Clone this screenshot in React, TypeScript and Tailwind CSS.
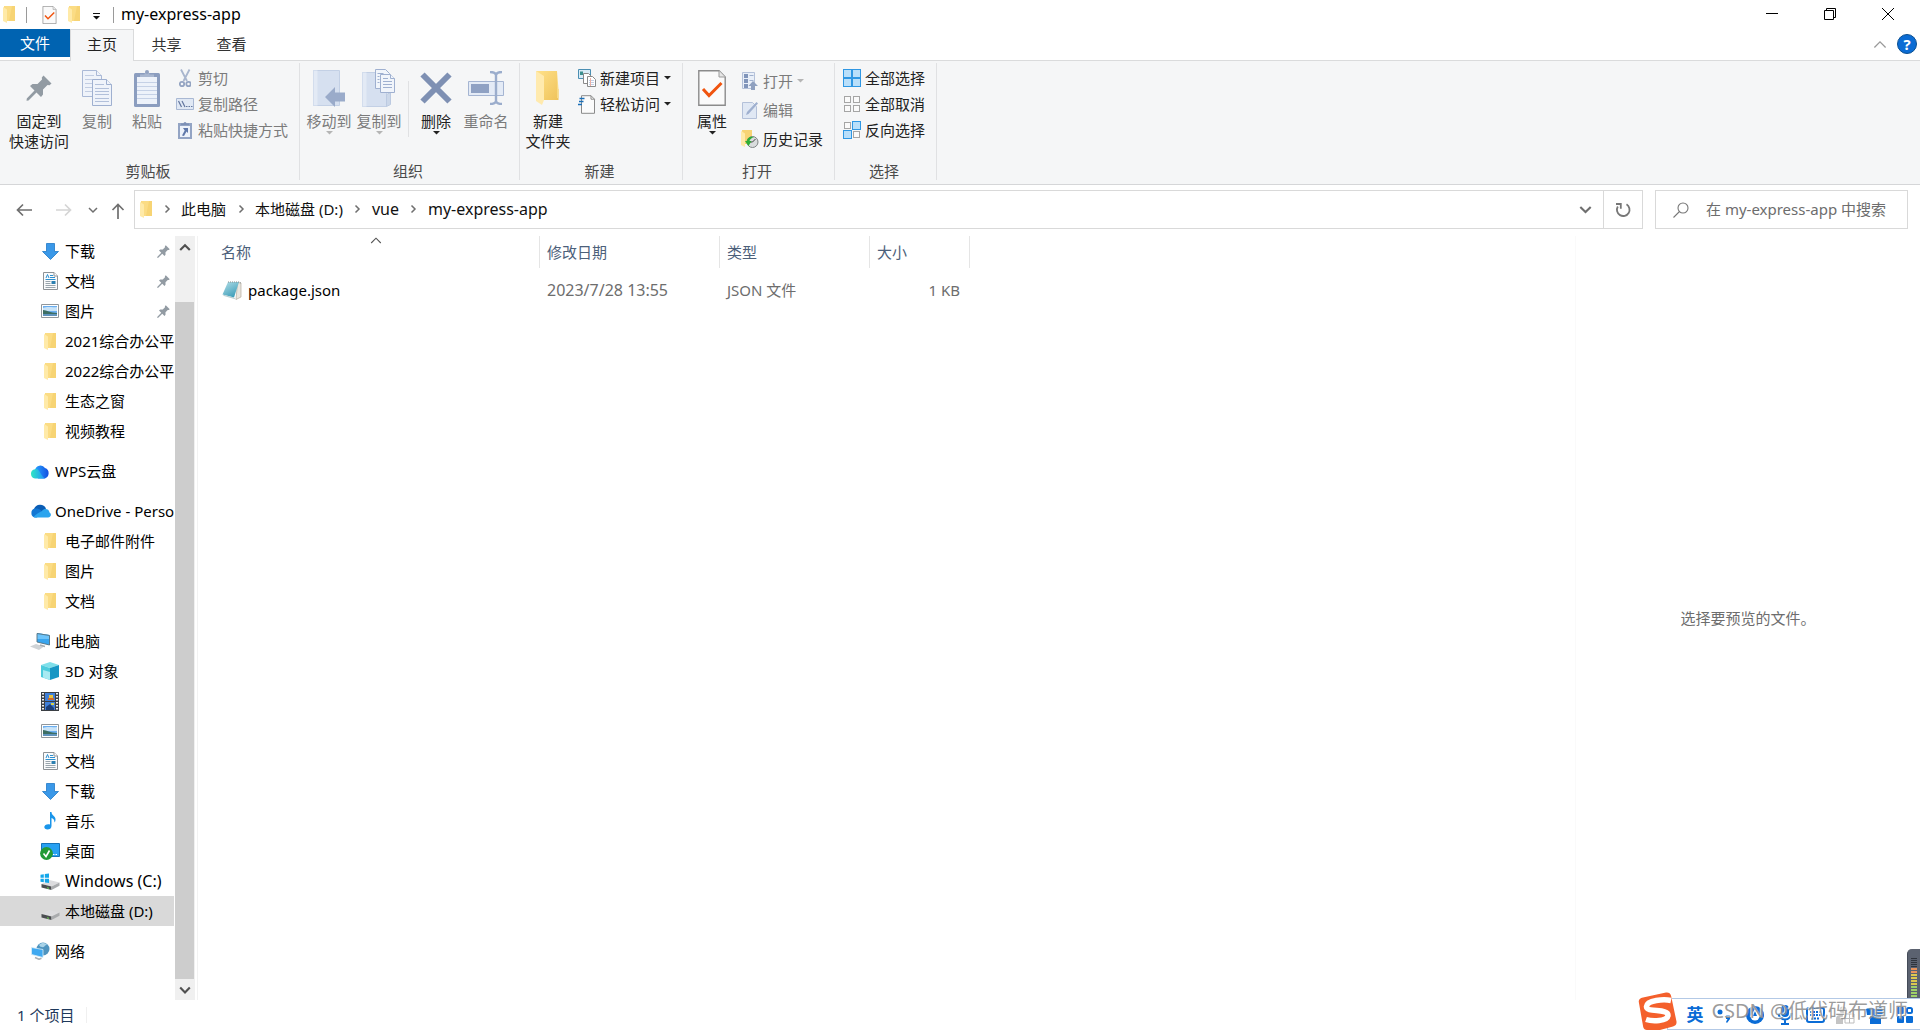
import type { ReactNode } from 'react';

/* ---------- small icons ---------- */

function Folder() {
  return (
    <svg width="12" height="17" viewBox="0 0 12 17">
      <path d="M1 0h11v15H2z" fill="#f7d474" />
      <path d="M1 0h8l-3 15H2z" fill="#fbdc84" />
      <path d="M0 1l4 2.500V17l-4-2z" fill="#ffeaa8" />
    </svg>
  );
}

function BigFolder() {
  return (
    <svg width="26" height="36" viewBox="0 0 26 36">
      <defs>
        <linearGradient id="bf" x1="0" x2="1" y1="0" y2="1">
          <stop offset="0" stopColor="#ffe18a" />
          <stop offset="1" stopColor="#efc35b" />
        </linearGradient>
      </defs>
      <path d="M1 1h21v18h1.500v11H6z" fill="url(#bf)" />
      <path d="M22 1v27h1.500V19z" fill="#f9db86" />
      <path d="M1 1l8 5v24l-2 5-6-4z" fill="#ffeaae" />
    </svg>
  );
}

function CheckPage({ w, h }: { w: number; h: number }) {
  return (
    <svg width={w} height={h} viewBox="0 0 28 36">
      <path d="M.8.8H21l6.200 6.200v28.200H.8z" fill="#fafafa" stroke="#8b8b8b" strokeWidth="1.400" />
      <path d="M21 .8V7h6.200" fill="#e6e6e6" stroke="#9b9b9b" />
      <path d="M5 19l6 6.500L23.500 13" fill="none" stroke="#f0540f" strokeWidth="3" />
    </svg>
  );
}

function Pin({ size }: { size: number }) {
  return (
    <svg width={size} height={size} viewBox="0 0 26 26" fill="#929ba3">
      <path d="M17.500 0.500L25.500 8.500 23.500 10.200 21.500 10 17 14.500 17 19.500 15 22 10.500 17.500 2.500 25.500 .5 25.800 .8 23.500 8.500 15.500 4 11 6.500 9 11.500 9 16 4.500 15.800 2.500z" />
    </svg>
  );
}

function CopyPages() {
  return (
    <svg width="30" height="36" viewBox="0 0 30 36" stroke="#aab9d6" fill="#eff3fa">
      <path d="M.5.500h14l5 5v21H.5z" />
      <path d="M14.500.500v5h5" />
      <path d="M3 5.500h9M3 9.500h13M3 13.500h13M3 17.500h13M3 21.500h13" stroke="#c2cde2" />
      <path d="M10.500 9.500h14l5 5v21h-19z" stroke="#9fb0d0" />
      <path d="M24.500 9.500v5h5" stroke="#9fb0d0" />
      <path d="M13 14.500h9M13 18.500h14M13 21.500h14M13 24.500h14M13 28.500h14M13 31.500h14" stroke="#b2c0da" />
    </svg>
  );
}

function Clipboard() {
  return (
    <svg width="26" height="37" viewBox="0 0 26 37">
      <rect x="0" y="3" width="26" height="34" rx="1.500" fill="#8b9dbf" />
      <rect x="3" y="7" width="20" height="27" fill="#edf2fa" />
      <path d="M3 12.500h20M3 16.500h20M3 20.500h20M3 24.500h20M3 28.500h20" stroke="#c5d1e6" />
      <path d="M6 7V4.500h4.500a2.500 2.500 0 015 0H20V7z" fill="#a9b7d0" />
      <circle cx="13" cy="2" r="2" fill="#93a3c2" />
    </svg>
  );
}

function Scissors() {
  return (
    <svg width="12" height="19" viewBox="0 0 12 19" fill="none" stroke="#94a4c2" strokeWidth="1.800">
      <path d="M2 0.500L8 12M10.500 0.500L4.500 12" stroke="#a9b6ce" />
      <circle cx="3" cy="15" r="2.200" />
      <circle cx="9.500" cy="15" r="2.200" />
    </svg>
  );
}

function PathIcon() {
  return (
    <svg width="18" height="12" viewBox="0 0 18 12">
      <path d="M.5.500h17v11H.5z" fill="#e0e8f4" stroke="#a9b8d3" />
      <path d="M2.500 3l3 6M6 3l3 6" stroke="#63779f" strokeWidth="1.200" />
      <path d="M10 8.500h1.500M12.500 8.500H14M15 8.500h1.500" stroke="#63779f" strokeWidth="1.200" />
    </svg>
  );
}

function ShortcutClip() {
  return (
    <svg width="14" height="18" viewBox="0 0 14 18">
      <rect width="14" height="16" y="2" fill="#93a4c4" />
      <rect x="2" y="5" width="10" height="11" fill="#edf2fa" />
      <path d="M3 4V2.500h2.500a1.500 1.500 0 013 0H11V4z" fill="#7d90b5" />
      <path d="M5 7h5v5l-1.500-1.500L6 15l-2-.5 2.700-5z" fill="#5f78aa" />
    </svg>
  );
}

function MoveTo() {
  return (
    <svg width="32" height="37" viewBox="0 0 32 37">
      <path d="M.5.500h26v35H.5z" fill="#d6e0f0" stroke="#c3d0e5" />
      <path d="M.5.500h4v35h-4z" fill="#e3eaf5" />
      <path d="M12 27l10-10v5.500h10v9H22V37z" fill="#9aabca" />
    </svg>
  );
}

function CopyTo() {
  return (
    <svg width="34" height="38" viewBox="0 0 34 38">
      <path d="M.5 3.500h24v34H.5z" fill="#d6e0f0" stroke="#c3d0e5" />
      <path d="M.5 3.500h4v34h-4z" fill="#e3eaf5" />
      <path d="M24.500 37.500v-12l4-2v12z" fill="#cbd7e9" stroke="#bccae1" />
      <g fill="#f1f5fb" stroke="#9fb0d0">
        <path d="M13.500.500h10l4 4v15h-14z" />
        <path d="M18.500 5.500h10l4 4v14h-14z" />
        <path d="M28.500 5.500v4h4M21 9.500h5M21 12.500h9M21 15.500h9M21 18.500h9M15.500 4.500h6M15.500 7.500h2M15.500 10.500h2M15.500 13.500h2" />
      </g>
    </svg>
  );
}

function DeleteX() {
  return (
    <svg width="32" height="32" viewBox="0 0 32 32">
      <path d="M2.500 2.500l27 27M29.500 2.500l-27 27" stroke="#7e90b3" strokeWidth="6" />
    </svg>
  );
}

function Rename() {
  return (
    <svg width="36" height="34" viewBox="0 0 36 34">
      <path d="M.5 10.500h35v14H.5z" fill="#e4ebf6" stroke="#a5b5d2" />
      <path d="M3 13h18v9H3z" fill="#8fa1c3" />
      <path d="M22 1c4 0 5.500 1 6 3 .5-2 2-3 6-3M28 3v28M22 33c4 0 5.500-1 6-3 .5 2 2 3 6 3" fill="none" stroke="#9badcc" strokeWidth="2.400" />
    </svg>
  );
}

function NewItem() {
  return (
    <svg width="18" height="18" viewBox="0 0 18 18">
      <path d="M.5.500h12v9H.5z" fill="#d9ecf7" stroke="#4b8fb3" />
      <path d="M2 6V2.500h3V6z" fill="#3a8f8f" />
      <path d="M5.500 4.500h5l3 3v7h-8z" fill="#fff" stroke="#8a8a8a" />
      <path d="M9.500 7.500h5l3 3v7h-8z" fill="#fff" stroke="#8a8a8a" />
      <path d="M11 11.500h5M11 13.500h5M11 15.500h5" stroke="#c3cfe6" />
      <path d="M12.500 9v8" stroke="#eab0a6" />
    </svg>
  );
}

function EasyAccess() {
  return (
    <svg width="18" height="19" viewBox="0 0 18 19">
      <path d="M3.500.700h9.500l3.500 3.500v14.100h-13z" fill="#fbfbfb" stroke="#8a8a8a" />
      <path d="M13 .7v3.500h3.500" fill="none" stroke="#8a8a8a" />
      <path d="M1.500 3.500h5M1 6.500h4.500M0 9.500h4" stroke="#1b6fb8" strokeWidth="1.400" />
    </svg>
  );
}

function OpenIcon() {
  return (
    <svg width="16" height="18" viewBox="0 0 16 18">
      <path d="M.5.500h12v16H.5z" fill="#e9eff8" stroke="#b4c1d9" />
      <path d="M2 2h4v4H2zM2 7h4v4H2zM2 12h4v4H2z" fill="#8195ba" />
      <path d="M7.500 3.500h4M7.500 8.500h4" stroke="#9fb0ce" />
      <path d="M11 9l5 5h-3v4H9v-4H6.500z" fill="#8fa0bf" />
    </svg>
  );
}

function EditIcon() {
  return (
    <svg width="16" height="18" viewBox="0 0 16 18">
      <path d="M.5 1.500h10l4 4v12H.5z" fill="#e0e8f4" stroke="#b4c1d9" />
      <path d="M4 14l1-3L14.500 1 16 2.500 6.500 13z" fill="#9fb0cf" />
    </svg>
  );
}

function HistoryIcon() {
  return (
    <svg width="18" height="18" viewBox="0 0 18 18">
      <path d="M1 0h10v14H2z" fill="#f7d474" />
      <path d="M0 1l4 2.500V17l-4-2z" fill="#ffeaa8" />
      <circle cx="11.500" cy="12" r="5.500" fill="#d9dcdd" stroke="#7f8484" />
      <path d="M11.500 12l3-3M8.500 12h3" stroke="#444" />
      <path d="M13 7c-4-1-7 1-7 4H4l3.500 5 3-5H8.500c.5-2 2-3 4.500-4z" fill="#2fae35" />
    </svg>
  );
}

function Tiles({ on }: { on: boolean[] }) {
  const at = [[1, 1], [10, 1], [1, 10], [10, 10]];
  return (
    <svg width="18" height="18" viewBox="0 0 18 18">
      {at.map(([x, y], i) => (
        <rect
          key={i}
          x={on[i] ? x - 0.5 : x + 0.5}
          y={on[i] ? y - 0.5 : y + 0.5}
          width={on[i] ? 8 : 6}
          height={on[i] ? 8 : 6}
          fill={on[i] ? '#b9dffa' : '#fafafa'}
          stroke={on[i] ? '#2f97e3' : '#a5a5a5'}
        />
      ))}
    </svg>
  );
}

function Caret({ color = '#222' }: { color?: string }) {
  return (
    <svg width="7" height="4" viewBox="0 0 7 4">
      <path d="M0 0h7L3.500 3.500z" fill={color} />
    </svg>
  );
}

function Chevron({ d, color = '#6f6f6f', w = 10, sw = 1.5 }: { d: 'up' | 'down' | 'right'; color?: string; w?: number; sw?: number }) {
  const p = { up: 'M1 7.500L5 3.500 9 7.500', down: 'M1 3L5 7 9 3', right: 'M3.500 1.500L7 5 3.500 8.500' }[d];
  return (
    <svg width={w} height={w} viewBox="0 0 10 10" fill="none" stroke={color} strokeWidth={sw}>
      <path d={p} />
    </svg>
  );
}

function Arrow({ d, color }: { d: 'left' | 'right' | 'up'; color: string }) {
  const p = {
    left: 'M16 8H1.500M7 2.500L1.500 8 7 13.500',
    right: 'M0 8h14.500M9 2.500L14.500 8 9 13.500',
    up: 'M8 16V1.500M2.500 7L8 1.500 13.500 7',
  }[d];
  return (
    <svg width="16" height="16" viewBox="0 0 16 16" fill="none" stroke={color} strokeWidth="1.700">
      <path d={p} />
    </svg>
  );
}

/* ---------- navigation icons ---------- */

function DownArrow() {
  return (
    <svg width="17" height="17" viewBox="0 0 17 17">
      <path d="M4.500.5h8v8h4L8.500 16.500.5 8.500h4z" fill="#3a98e8" stroke="#2079c7" strokeWidth=".8" />
    </svg>
  );
}

function DocIcon() {
  return (
    <svg width="15" height="18" viewBox="0 0 15 18">
      <path d="M.5.500h10.500l3.500 3.500v13.500H.5z" fill="#fafbfc" stroke="#8d9296" />
      <path d="M11 .5v3.500h3.500" fill="#fff" stroke="#8d9296" />
      <path d="M3 6l1.500-3.500L6 6M7 3.500h3M7 5.500h5M2.500 7.500h10" fill="none" stroke="#2c8fd0" />
      <path d="M2.500 9.500h5M2.500 11.500h5M2.500 13.500h10M2.500 15.500h10" stroke="#9aa5ad" />
      <path d="M8.500 9h4v3h-4z" fill="#2c7fb0" />
    </svg>
  );
}

function PictureIcon() {
  return (
    <svg width="18" height="14" viewBox="0 0 18 14">
      <path d="M.5.500h17v13H.5z" fill="#fff" stroke="#90979c" />
      <path d="M2 2h14v10H2z" fill="#6aaef0" />
      <path d="M2 4c5-2 9 0 14-1v4H2z" fill="#c8e3f8" />
      <path d="M2 6c4 0 7 3 14 3v2H2z" fill="#3d6f64" />
      <path d="M2 10h14v2H2z" fill="#5f93bd" />
    </svg>
  );
}

function WpsCloud() {
  return (
    <svg width="20" height="15" viewBox="0 0 20 15">
      <defs>
        <linearGradient id="wc" x1="0" x2="1">
          <stop offset="0" stopColor="#2fe6c4" />
          <stop offset="1" stopColor="#1f8dff" />
        </linearGradient>
        <linearGradient id="wr" x1="0" x2="1">
          <stop offset="0" stopColor="#27a2ff" />
          <stop offset="1" stopColor="#124fe0" />
        </linearGradient>
      </defs>
      <path d="M5 6a5.500 5.500 0 0110-2 5.500 5.500 0 01-.5 10.500H8z" fill="url(#wr)" />
      <path d="M5 14.500a4.700 4.700 0 010-9.300c3-.5 4 1.500 5.500 4s3 5 5.500 5.300z" fill="url(#wc)" />
    </svg>
  );
}

function OneDrive() {
  return (
    <svg width="21" height="14" viewBox="0 0 21 14">
      <path d="M4 5a6.500 6.500 0 0112-.5l-4 4z" fill="#0a5db5" />
      <path d="M5 13.500A4.600 4.600 0 015 4.500c3-.5 5 1 7 2.500l-5 6.500z" fill="#1377d3" />
      <path d="M12 7c2-3 7-2.500 7.500 1.500C22 10 21 13.500 18 13.500H4.500C1.500 13.500 8 9 12 7z" fill="#2ba4ee" />
    </svg>
  );
}

function Computer() {
  return (
    <svg width="20" height="17" viewBox="0 0 20 17">
      <path d="M7 0l12.500 2v10L7 9z" fill="#39a5ee" />
      <path d="M7 0l12.500 2v4L7 6z" fill="#6cc4fb" />
      <path d="M7 .5l12.500 2v9.500L7 9z" fill="none" stroke="#53707f" strokeWidth=".9" />
      <path d="M0 13.500l6-2.500 8 2.500-5 3.500z" fill="#cfd3d6" />
      <path d="M10 12l5 1.500" stroke="#a7acb0" strokeWidth="1.500" />
    </svg>
  );
}

function Cube() {
  return (
    <svg width="18" height="18" viewBox="0 0 18 18">
      <path d="M9 0l9 3-9 3-9-3z" fill="#7fdfea" />
      <path d="M0 3l9 3v12l-9-3z" fill="#4ccbdc" />
      <path d="M18 3L9 6v12l9-3z" fill="#1796c4" />
      <path d="M2 8l7 2v8l-7-2.500z" fill="#a8eaf2" />
    </svg>
  );
}

function Film() {
  return (
    <svg width="18" height="19" viewBox="0 0 18 19">
      <path d="M0 0h18v19H0z" fill="#3a3f44" />
      <path d="M4 1h10v8H4zM4 10h10v8H4z" fill="#3f7fd8" />
      <path d="M8 3h4v3H8z" fill="#e8c23a" />
      <path d="M7 6h6v2H7z" fill="#c9682f" />
      <path d="M5 15l4-3 4 4v2H5z" fill="#1d3f77" />
      <path d="M10 11h3v2h-3z" fill="#d5d04c" />
      <path d="M2 1v17M16 1v17" stroke="#f1f1f1" strokeWidth="2" strokeDasharray="1.500 1.500" />
    </svg>
  );
}

function Music() {
  return (
    <svg width="12" height="18" viewBox="0 0 12 18">
      <path d="M6 0h1.500c0 3.500 4 4 4 7.500 0 1.500-.5 2.500-1 3 0-3-1.500-4-3-4.500V14c0 2.500-2 3.500-4 3.500S.3 16.300.3 15c0-2 3-3.500 5.700-2.500z" fill="#1a95ea" />
    </svg>
  );
}

function Desktop() {
  return (
    <svg width="20" height="17" viewBox="0 0 20 17">
      <path d="M1.500.500h18v13h-18z" fill="#27a0f2" stroke="#1572b8" />
      <path d="M13 11.500h1.500M15.500 11.500H17" stroke="#fff" />
      <circle cx="6.500" cy="10.500" r="6.400" fill="#239a36" />
      <path d="M3.500 10.500l2.500 3 3.500-6" fill="none" stroke="#fff" strokeWidth="1.600" />
    </svg>
  );
}

function Drive({ win = false }: { win?: boolean }) {
  return (
    <svg width="20" height="17" viewBox="0 0 20 17">
      <path d="M1.500 11l8-4 10 2.500-8 4z" fill="#dcdcde" />
      <path d="M1.500 11l10 2.500V17l-10-2.500z" fill="#4a4d50" />
      <path d="M11.500 13.500l8-4v3.200L11.500 17z" fill="#a9abad" />
      <path d="M7 14.800l2 .5" stroke="#6bd64b" />
      {win && (
        <g>
          <path d="M0 0h9v10H0z" fill="#fff" />
          <path d="M.5 1.800l3.300-.5v3.500H.5zM4.800 1L9 .4v4.400H4.800zM.5 5.800h3.300v3.400l-3.300-.5zM4.800 5.800H9V10l-4.200-.6z" fill="#14a7ea" />
        </g>
      )}
    </svg>
  );
}

function Network() {
  return (
    <svg width="19" height="18" viewBox="0 0 19 18">
      <circle cx="12" cy="7" r="6.500" fill="#4f94bf" />
      <path d="M8 3c3-3 7-2 8 0-3 0-2 3-5 2-2 0-2-1-3-2z" fill="#a9d3e8" />
      <path d="M.5 5.500L12 7.500v8L.5 12.500z" fill="#3fa9f1" stroke="#dbeef8" strokeWidth=".8" />
      <path d="M4 15.500l4 1.800 2.500-1" fill="none" stroke="#a9b0b5" strokeWidth="1.500" />
    </svg>
  );
}

function Notepad() {
  return (
    <svg width="20" height="19" viewBox="0 0 20 19" className="shrink-0">
      <defs>
        <linearGradient id="np" x1="0" y1="0" x2=".6" y2="1">
          <stop offset="0" stopColor="#b5dfe8" />
          <stop offset="1" stopColor="#3f9fba" />
        </linearGradient>
      </defs>
      <path d="M15.500 1.500l3.500.5v14l-5 2.500z" fill="#e9e6df" stroke="#a89f90" strokeWidth=".6" />
      <path d="M6 1h11l-5 15.500L.5 13.500z" fill="url(#np)" />
      <path d="M6 1h11l2 1" fill="none" stroke="#8a8f8f" strokeDasharray="1 1" />
      <path d="M.5 13.500L12 16.500l2 2L2 15z" fill="#b9cfd3" />
    </svg>
  );
}

/* ---------- ribbon parts ---------- */

function Group({ label, width, children }: { label: string; width: string; children: ReactNode }) {
  return (
    <section className={`${width} relative flex h-full shrink-0 flex-col`}>
      <div className="flex h-[100px] items-start">{children}</div>
      <h2 className="pr-1 text-center leading-5 text-[#4a4a4a]">{label}</h2>
      <span className="absolute top-0.5 right-0 bottom-1 w-px bg-[#e0e1e3]" />
    </section>
  );
}

function Big({ icon, lines, width = 'w-[50px]', off, caret }: { icon: ReactNode; lines: string[]; width?: string; off?: boolean; caret?: boolean }) {
  return (
    <button disabled={off} className={`${width} flex shrink-0 flex-col items-center pt-1.5 whitespace-nowrap ${off ? 'text-[#7b7b7b]' : 'text-[#222]'}`}>
      <span className="flex h-[42px] items-center justify-center">{icon}</span>
      <span className="mt-0.5 leading-5">
        {lines.map((l) => (
          <span key={l} className="block">{l}</span>
        ))}
      </span>
      {caret && <Caret color={off ? '#b5b5b5' : '#222'} />}
    </button>
  );
}

function Small({ icon, text, off, caret, tall }: { icon: ReactNode; text: string; off?: boolean; caret?: boolean; tall?: boolean }) {
  return (
    <button disabled={off} className={`flex items-center gap-1 whitespace-nowrap ${tall ? 'h-[29px]' : 'h-[26px]'} ${off ? 'text-[#7b7b7b]' : 'text-[#222]'}`}>
      <span className="flex w-[18px] justify-center">{icon}</span>
      {text}
      {caret && <Caret color={off ? '#b5b5b5' : '#222'} />}
    </button>
  );
}

type Item = { icon: ReactNode; text: string; top?: boolean; pin?: boolean; sel?: boolean; latin?: boolean };

const tree: Item[][] = [
  [
    { icon: <DownArrow />, text: '下载', pin: true },
    { icon: <DocIcon />, text: '文档', pin: true },
    { icon: <PictureIcon />, text: '图片', pin: true },
    { icon: <Folder />, text: '2021综合办公平' },
    { icon: <Folder />, text: '2022综合办公平' },
    { icon: <Folder />, text: '生态之窗' },
    { icon: <Folder />, text: '视频教程' },
  ],
  [{ icon: <WpsCloud />, text: 'WPS云盘', top: true }],
  [
    { icon: <OneDrive />, text: 'OneDrive - Perso', top: true },
    { icon: <Folder />, text: '电子邮件附件' },
    { icon: <Folder />, text: '图片' },
    { icon: <Folder />, text: '文档' },
  ],
  [
    { icon: <Computer />, text: '此电脑', top: true },
    { icon: <Cube />, text: '3D 对象' },
    { icon: <Film />, text: '视频' },
    { icon: <PictureIcon />, text: '图片' },
    { icon: <DocIcon />, text: '文档' },
    { icon: <DownArrow />, text: '下载' },
    { icon: <Music />, text: '音乐' },
    { icon: <Desktop />, text: '桌面' },
    { icon: <Drive win />, text: 'Windows (C:)', latin: true },
    { icon: <Drive />, text: '本地磁盘 (D:)', sel: true },
  ],
  [{ icon: <Network />, text: '网络', top: true }],
];

function TreeItem({ icon, text, top, pin, sel, latin }: Item) {
  return (
    <li>
      <a href="#" className={`flex h-[30px] items-center whitespace-nowrap ${top ? 'pl-[29px]' : 'pl-[39px]'} ${sel ? 'bg-[#d9d9d9]' : ''}`}>
        <span className="flex w-[22px] shrink-0 justify-center">{icon}</span>
        <span className={latin ? 'ml-1 text-base leading-5' : 'ml-1'}>{text}</span>
        {pin && (
          <span className="mr-1 ml-auto">
            <Pin size={13} />
          </span>
        )}
      </a>
    </li>
  );
}

function Titlebar() {
  return (
    <header className="flex h-[29px] items-center">
      <div className="flex h-full flex-1 items-center">
        <span className="ml-[3px]"><Folder /></span>
        <span className="ml-[11px] h-4 w-px bg-[#9a9a9a]" />
        <button aria-label="属性" className="ml-[15px]"><CheckPage w={15} h={18} /></button>
        <button aria-label="新建文件夹" className="ml-[11px]"><Folder /></button>
        <button aria-label="自定义快速访问工具栏" className="ml-[13px] pt-1">
          <svg width="7" height="7" viewBox="0 0 7 7"><path d="M0 0h7v1H0zM0 3h7L3.500 6.500z" fill="#111" /></svg>
        </button>
        <span className="ml-[13px] h-4 w-px bg-[#9a9a9a]" />
        <h1 className="ml-[7px] pb-0.5 text-base leading-5">my-express-app</h1>
      </div>
      <button aria-label="最小化" className="flex h-7 w-[58px] items-center justify-center self-start">
        <svg width="12" height="12"><path d="M0 5.500h12" stroke="#000" /></svg>
      </button>
      <button aria-label="还原" className="flex h-7 w-[58px] items-center justify-center self-start">
        <svg width="12" height="12" fill="none" stroke="#000"><path d="M.5 2.500h9v9h-9zM2.500 2.500v-2h9v9h-2" /></svg>
      </button>
      <button aria-label="关闭" className="mr-[3px] flex h-7 w-[58px] items-center justify-center self-start">
        <svg width="12" height="12" stroke="#000"><path d="M0 0l12 12M12 0L0 12" /></svg>
      </button>
    </header>
  );
}

function Tabs() {
  return (
    <nav className="flex h-8 items-start border-b border-[#dadbdc]">
      <button className="h-7 w-[70px] bg-[#0063b1] text-white">文件</button>
      <button className="h-8 w-16 border border-b-0 border-[#dadbdc] bg-[#f5f6f7] pb-1 text-[#222]">主页</button>
      <button className="h-[31px] w-[65px] pb-0.5 text-[#333]">共享</button>
      <button className="h-[31px] w-[65px] pb-0.5 text-[#333]">查看</button>
      <div className="mr-[3px] ml-auto flex h-[30px] items-center gap-2.5">
        <button aria-label="最小化功能区"><Chevron d="up" w={14} sw={0.9} color="#999" /></button>
        <button aria-label="帮助" className="h-5 w-5 rounded-full border border-[#0a4f91] bg-[#0b6cd4] text-[15px] leading-[18px] font-bold text-white">?</button>
      </div>
    </nav>
  );
}

function Ribbon() {
  return (
    <div className="flex h-[124px] border-b border-[#d5d6d8] bg-[#f5f6f7]">
      <Group label="剪贴板" width="w-[300px]">
        <div className="flex pl-[9px]">
          <Big icon={<Pin size={26} />} lines={['固定到', '快速访问']} width="w-[60px]" />
          <span className="w-[3px]" />
          <Big icon={<CopyPages />} lines={['复制']} off />
          <Big icon={<Clipboard />} lines={['粘贴']} off />
        </div>
        <div className="ml-1 flex flex-col pt-1">
          <Small icon={<Scissors />} text="剪切" off />
          <Small icon={<PathIcon />} text="复制路径" off />
          <Small icon={<ShortcutClip />} text="粘贴快捷方式" off />
        </div>
      </Group>
      <Group label="组织" width="w-[220px]">
        <div className="flex pl-1">
          <Big icon={<MoveTo />} lines={['移动到']} off caret />
          <Big icon={<CopyTo />} lines={['复制到']} off caret />
          <span className="mt-5 mr-0.5 ml-1 h-[56px] w-px bg-[#e0e1e3]" />
          <Big icon={<DeleteX />} lines={['删除']} caret />
          <Big icon={<Rename />} lines={['重命名']} off />
        </div>
      </Group>
      <Group label="新建" width="w-[163px]">
        <Big icon={<BigFolder />} lines={['新建', '文件夹']} width="w-[56px]" />
        <div className="ml-0.5 flex flex-col pt-1">
          <Small icon={<NewItem />} text="新建项目" caret />
          <Small icon={<EasyAccess />} text="轻松访问" caret />
        </div>
      </Group>
      <Group label="打开" width="w-[152px]">
        <Big icon={<CheckPage w={28} h={36} />} lines={['属性']} width="w-[58px]" caret />
        <div className="flex flex-col pt-[5px]">
          <Small icon={<OpenIcon />} text="打开" off caret tall />
          <Small icon={<EditIcon />} text="编辑" off tall />
          <Small icon={<HistoryIcon />} text="历史记录" tall />
        </div>
      </Group>
      <Group label="选择" width="w-[102px]">
        <div className="ml-2 flex flex-col pt-1">
          <Small icon={<Tiles on={[true, true, true, true]} />} text="全部选择" />
          <Small icon={<Tiles on={[false, false, false, false]} />} text="全部取消" />
          <Small icon={<Tiles on={[false, true, true, false]} />} text="反向选择" />
        </div>
      </Group>
    </div>
  );
}

function AddressRow() {
  const crumbs = ['此电脑', '本地磁盘 (D:)', 'vue', 'my-express-app'];
  return (
    <div className="flex items-center pt-[5px] pr-3 pb-[7px]">
      <button aria-label="后退" className="ml-4"><Arrow d="left" color="#6f6f6f" /></button>
      <button aria-label="前进" className="ml-6" disabled><Arrow d="right" color="#d5d5d5" /></button>
      <button aria-label="最近位置" className="ml-4"><Chevron d="down" /></button>
      <button aria-label="上移" className="mt-0.5 ml-3"><Arrow d="up" color="#6f6f6f" /></button>
      <div className="ml-2 flex h-[39px] flex-1 items-center border border-[#d9d9d9] pl-[5px]">
        <Folder />
        <ol className="flex flex-1 items-center pb-0.5">
          {crumbs.map((c, i) => (
            <li key={c} className="flex items-center">
              <span className="flex w-[29px] justify-center"><Chevron d="right" /></span>
              <button className={i > 1 ? 'text-base leading-5 text-[#111]' : 'text-[#111]'}>{c}</button>
            </li>
          ))}
        </ol>
        <button aria-label="以前的位置" className="flex w-9 justify-center"><Chevron d="down" w={13} sw={1.6} /></button>
        <button aria-label="刷新" className="flex h-full w-[39px] items-center justify-center border-l border-[#d9d9d9]">
          <svg width="16" height="16" viewBox="0 0 16 16" fill="none" stroke="#777" strokeWidth="1.800">
            <path d="M11.500 2.300A6.300 6.300 0 112.800 4.500M1 2h4.800v4.800" />
          </svg>
        </button>
      </div>
      <label className="ml-3 flex h-[39px] w-[253px] items-center border border-[#d9d9d9] pl-[17px]">
        <svg width="16" height="16" viewBox="0 0 16 16" fill="none" stroke="#777" strokeWidth="1.100">
          <circle cx="10" cy="6" r="5" />
          <path d="M6.500 9.500L.5 15.500" />
        </svg>
        <input type="search" aria-label="搜索" placeholder="在 my-express-app 中搜索" className="ml-[17px] w-0 flex-1 pb-0.5 outline-none placeholder:text-[#6d6d6d]" />
      </label>
    </div>
  );
}

function FileTable() {
  const th = 'border-r border-[#e5e5e5] pl-[7px] text-left font-normal text-[#4c607a]';
  return (
    <table className="w-[772px] table-fixed border-separate border-spacing-0">
      <thead>
        <tr className="h-8">
          <th className="relative w-[342px] border-r border-[#e5e5e5] pl-[23px] text-left font-normal text-[#4c607a]">
            名称
            <span className="absolute inset-x-0 -top-0.5 flex justify-center pl-3.5"><Chevron d="up" w={12} sw={0.9} color="#555" /></span>
          </th>
          <th className={`${th} w-[180px]`}>修改日期</th>
          <th className={`${th} w-[150px]`}>类型</th>
          <th className={`${th} w-[100px]`}>大小</th>
        </tr>
      </thead>
      <tbody>
        <tr className="h-11 text-[#6d6d6d]">
          <td className="pl-6">
            <a href="#" className="flex items-center gap-1.5 text-black"><Notepad />package.json</a>
          </td>
          <td className="pl-[7px] text-base leading-5">2023/7/28 13:55</td>
          <td className="pl-[7px]">JSON 文件</td>
          <td className="pr-2.5 text-right">1 KB</td>
        </tr>
      </tbody>
    </table>
  );
}

function ImeBar() {
  const cell = 'flex h-full w-[30px] items-center justify-center pt-0.5';
  return (
    <div className="absolute right-0 bottom-0 flex h-8 items-center border border-r-0 border-[#b3c9e6] bg-white pl-3 text-[#0a6cd6]">
      <svg width="40" height="38" viewBox="0 0 40 38" className="absolute right-[242px] -bottom-px">
        <path d="M5 5.500L28 .5q4-.5 5 3l5.500 26q.5 4-3.500 5L22 38H9q-3 0-3.800-3L.8 10q-.5-3.500 4.200-4.500z" fill="#f4602c" />
        <path d="M33 8.500c-7-1.500-24-.5-24.500 6C8 21 30.500 16 30 23.500c-.5 6-16 6-22 4" fill="none" stroke="#fff" strokeWidth="5.500" />
      </svg>
      <button className={`${cell} text-[17px] font-bold`}>英</button>
      <button aria-label="标点" className={cell}>
        <svg width="18" height="18" viewBox="0 0 18 18" fill="currentColor"><circle cx="4" cy="6" r="2.500" /><path d="M10 9h4v4l-3 4-1-1 1.500-3H10z" /></svg>
      </button>
      <button aria-label="智能助手" className={cell}>
        <svg width="18" height="18" viewBox="0 0 18 18"><circle cx="9" cy="9" r="9" fill="currentColor" /><path d="M9 3l4.500 7a4.500 4.500 0 01-9 0z" fill="#fff" /><path d="M9 5l2 5H7z" fill="currentColor" /></svg>
      </button>
      <button aria-label="语音" className={cell}>
        <svg width="16" height="20" viewBox="0 0 16 20" fill="none" stroke="currentColor" strokeWidth="2"><rect x="5" y="1" width="6" height="10" rx="3" fill="currentColor" /><path d="M1.500 8a6.500 6.500 0 0013 0M8 14v5M4 19h8" /></svg>
      </button>
      <button aria-label="软键盘" className={cell}>
        <svg width="19" height="16" viewBox="0 0 19 16" fill="none" stroke="currentColor" strokeWidth="2"><rect x="1" y="1" width="17" height="14" rx="2" /><path d="M4 5h11M4 8h11M5 11.500h9" strokeDasharray="2 1" /></svg>
      </button>
      <button aria-label="登录" className={cell}>
        <svg width="19" height="18" viewBox="0 0 19 18" fill="#c4c4c4"><circle cx="7" cy="4" r="3.500" /><path d="M0 18v-5q0-4 4-4h3v9z" /><path d="M9 8h9v9H9zM9 12.500h9M13.500 8v9" fill="#fff" stroke="#bdbdbd" /></svg>
      </button>
      <button aria-label="皮肤" className={cell}>
        <svg width="19" height="17" viewBox="0 0 19 17" fill="currentColor"><path d="M0 2l5-2q4.500 4 9 0l5 2-1 6h-3v9H4V8H1z" /></svg>
      </button>
      <button aria-label="工具箱" className={cell}>
        <svg width="16" height="16" viewBox="0 0 16 16" fill="currentColor"><rect width="7" height="7" rx="1" /><rect x="10" y="1" width="5" height="5" rx="1.500" fill="none" stroke="currentColor" strokeWidth="2" /><rect y="9" width="7" height="7" rx="1" /><rect x="9" y="9" width="7" height="7" rx="1" /></svg>
      </button>
      <span className="pointer-events-none absolute right-3 bottom-1 text-[20px] leading-7 whitespace-nowrap text-[#8a8a8a]/85 [text-shadow:-1px_-1px_1px_#fff]">
        CSDN @低代码布道师
      </span>
    </div>
  );
}

function Meter() {
  return (
    <div className="absolute right-0 bottom-8 flex h-[49px] w-[13px] flex-col items-center rounded-tl-[5px] border-l border-[#444b58] bg-[#5b6270] pt-2">
      <svg width="6" height="40" viewBox="0 0 6 40">
        <path d="M3 1v9" stroke="#2f343d" strokeWidth="6" strokeDasharray="1 1" />
        <path d="M3 11v6" stroke="#e8935c" strokeWidth="6" strokeDasharray="2 1" />
        <path d="M3 17v12" stroke="#dcc84e" strokeWidth="6" strokeDasharray="2 1" />
        <path d="M3 29v11" stroke="#9fd068" strokeWidth="6" strokeDasharray="2 1" />
      </svg>
    </div>
  );
}

export default function App() {
  return (
    <div className="relative flex min-h-screen flex-col overflow-hidden bg-white font-['Noto_Sans','Noto_Sans_CJK_SC',sans-serif] text-[15px] leading-5 text-black">
      <Titlebar />
      <Tabs />
      <Ribbon />
      <AddressRow />
      <main className="flex flex-1">
        <nav aria-label="导航窗格" className="w-[174px] shrink-0">
          {tree.map((g, i) => (
            <ul key={i} className="mb-2.5">
              {g.map((it) => (
                <TreeItem key={it.text} {...it} />
              ))}
            </ul>
          ))}
        </nav>
        <div className="ml-px flex w-5 shrink-0 flex-col bg-[#f0f0f0]">
          <button aria-label="向上滚动" className="flex h-[21px] items-center justify-center"><Chevron d="up" w={12} sw={1.8} color="#505050" /></button>
          <span className="mt-[45px] w-[19px] flex-1 bg-[#cdcdcd]" />
          <button aria-label="向下滚动" className="flex h-[21px] items-center justify-center"><Chevron d="down" w={12} sw={1.8} color="#505050" /></button>
        </div>
        <section className="ml-0.5 flex-1 border-l border-[#f2f2f2]">
          <FileTable />
        </section>
        <aside className="flex w-[345px] items-center justify-center border-l border-[#fafafa] text-[#6d6d6d]">
          选择要预览的文件。
        </aside>
      </main>
      <footer className="flex h-[30px] items-center pl-[17px] text-[#1e395b]">
        1 个项目
        <span className="ml-3 h-4 w-px bg-[#f0f0f0]" />
      </footer>
      <Meter />
      <ImeBar />
    </div>
  );
}
